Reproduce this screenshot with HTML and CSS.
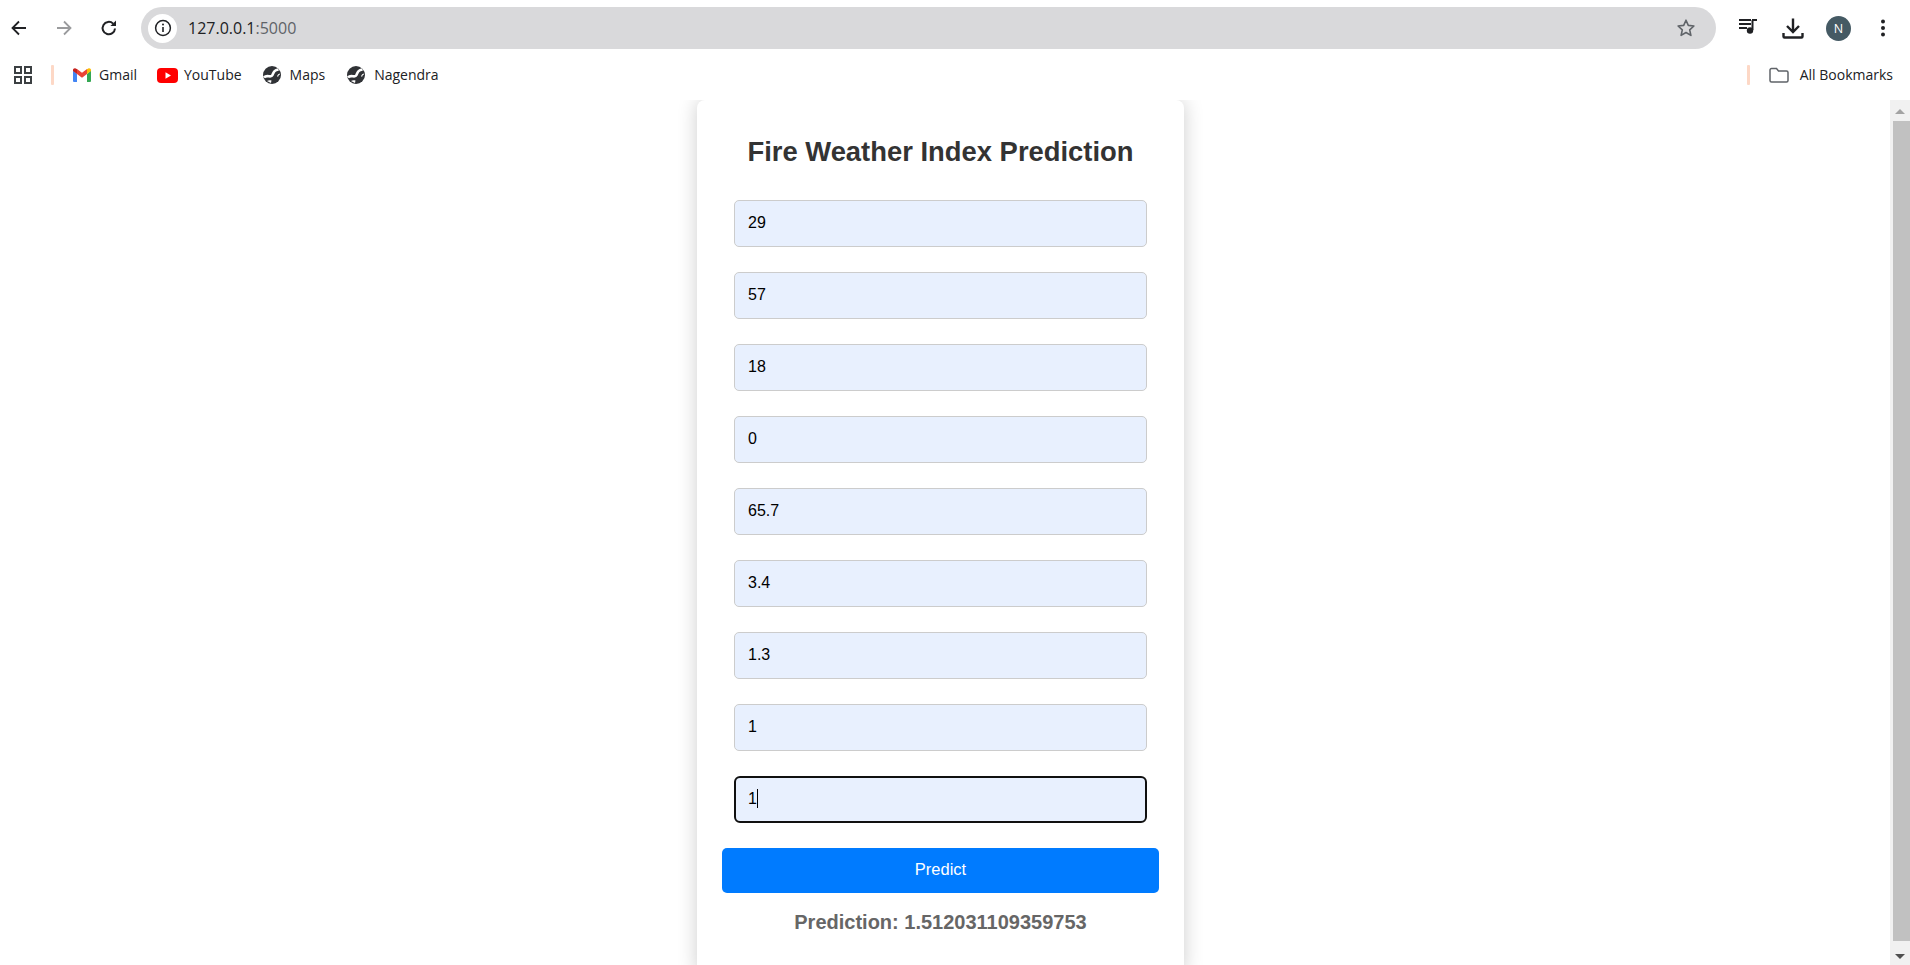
FILE: index.html
```html
<!DOCTYPE html>
<html lang="en">
<head>
    <meta charset="UTF-8">
    <meta name="viewport" content="width=device-width, initial-scale=1.0">
    <title>Fire Weather Index Prediction</title>
    <link rel="stylesheet" href="styles.css">
</head>
<body>
    <div class="toolbar">
        <svg class="nav-icon" viewBox="0 0 20 20" width="20" height="20"><path d="M17 10H4M10 3.500 3.500 10l6.500 6.500" fill="none" stroke="#202124" stroke-width="1.800"/></svg>
        <svg class="nav-icon" viewBox="0 0 20 20" width="20" height="20"><path d="M3 10h13M10 3.500l6.500 6.500-6.500 6.500" fill="none" stroke="#9a9b9d" stroke-width="1.800"/></svg>
        <svg class="nav-icon" viewBox="0 0 20 20" width="20" height="20"><path d="M16 10.500a6.200 6.200 0 1 1-1.900-4.900" fill="none" stroke="#202124" stroke-width="2"/><path d="M17 2.500v5.600h-5.600z" fill="#202124"/></svg>
        <div class="omnibox">
            <span class="site-info">
                <svg viewBox="0 0 18 18" width="18" height="18"><circle cx="9" cy="9" r="7.400" fill="none" stroke="#202124" stroke-width="1.500"/><path d="M9 8v5" stroke="#202124" stroke-width="1.600"/><circle cx="9" cy="5.600" r="1" fill="#202124"/></svg>
            </span>
            <span class="url">127.0.0.1<span class="url-port">:5000</span></span>
            <svg class="star" viewBox="0 0 20 20" width="20" height="20"><path d="M10 2.200l2.300 5.200 5.600.6-4.200 3.800 1.200 5.600L10 14.500l-4.900 2.900 1.200-5.600L2.100 8l5.600-.6z" fill="none" stroke="#5f6368" stroke-width="1.600" stroke-linejoin="round"/></svg>
        </div>
        <svg class="queue" viewBox="0 0 20 20" width="20" height="20"><path d="M1 4h12M1 8h12M1 12h8" stroke="#202124" stroke-width="1.800"/><path d="M14 4h5" stroke="#202124" stroke-width="2"/><path d="M14.500 4v10" stroke="#202124" stroke-width="2"/><circle cx="12" cy="14.500" r="3.200" fill="#202124"/></svg>
        <svg class="download" viewBox="0 0 22 22" width="22" height="22"><path d="M11 1.500v13M5 9l6 6 6-6" fill="none" stroke="#202124" stroke-width="2.400"/><path d="M1.500 16v3.500a1 1 0 0 0 1 1h17a1 1 0 0 0 1-1V16" fill="none" stroke="#202124" stroke-width="2.400"/></svg>
        <span class="avatar">N</span>
        <svg class="kebab" viewBox="0 0 6 20" width="6" height="20"><circle cx="3" cy="3.500" r="2" fill="#202124"/><circle cx="3" cy="10" r="2" fill="#202124"/><circle cx="3" cy="16.500" r="2" fill="#202124"/></svg>
    </div>

    <div class="bookmarks">
        <svg class="apps" viewBox="0 0 18 18" width="18" height="18"><path d="M1 1h6v6H1zM11 1h6v6h-6zM1 11h6v6H1zM11 11h6v6h-6z" fill="none" stroke="#3c4043" stroke-width="2"/></svg>
        <span class="sep"></span>
        <a class="mark mark-gmail">
            <svg class="mark-icon" viewBox="0 0 18 14" width="18" height="14"><path d="M0 2.500V13a1 1 0 0 0 1 1h3V6z" fill="#4285f4"/><path d="M18 2.500V13a1 1 0 0 1-1 1h-3V6z" fill="#34a853"/><path d="M14 1v5l4-3V2c0-1.500-1.700-2.300-3-1.300z" fill="#fbbc04"/><path d="M4 6V1l5 3.800L14 1v5l-5 3.800z" fill="#ea4335"/><path d="M0 3V2C0 .5 1.700-.3 3 .7L4 1v5z" fill="#c5221f"/></svg>
            <span class="mark-label">Gmail</span>
        </a>
        <a class="mark mark-yt">
            <svg class="mark-icon" viewBox="0 0 21 15" width="21" height="15"><rect width="21" height="15" rx="4" fill="#f00"/><path d="M8.500 4.300v6.400l5.500-3.200z" fill="#fff"/></svg>
            <span class="mark-label">YouTube</span>
        </a>
        <a class="mark mark-maps">
            <svg class="mark-icon" viewBox="0 0 18 18" width="18" height="18"><circle cx="9" cy="9" r="9" fill="#303236"/><path d="M1 11.500C4 8 8 12.500 9.500 9S11 4.500 15.500 3.500" fill="none" stroke="#fff" stroke-width="2.600"/><path d="M4 15c1.500-1 3-1 4.500-.5L8 17z" fill="#fff"/><path d="M17 8c-1 0-2 1-2.500 2.500" fill="none" stroke="#fff" stroke-width="1.200"/></svg>
            <span class="mark-label">Maps</span>
        </a>
        <a class="mark">
            <svg class="mark-icon" viewBox="0 0 18 18" width="18" height="18"><circle cx="9" cy="9" r="9" fill="#303236"/><path d="M1 11.500C4 8 8 12.500 9.500 9S11 4.500 15.500 3.500" fill="none" stroke="#fff" stroke-width="2.600"/><path d="M4 15c1.500-1 3-1 4.500-.5L8 17z" fill="#fff"/><path d="M17 8c-1 0-2 1-2.500 2.500" fill="none" stroke="#fff" stroke-width="1.200"/></svg>
            <span class="mark-label">Nagendra</span>
        </a>
        <span class="sep sep-right"></span>
        <a class="mark mark-all">
            <svg class="mark-icon" viewBox="0 0 20 16" width="20" height="16"><path d="M1 3a1.500 1.500 0 0 1 1.500-1.500h5L9.500 4h8A1.500 1.500 0 0 1 19 5.500v8a1.500 1.500 0 0 1-1.500 1.500h-15A1.500 1.500 0 0 1 1 13.500z" fill="none" stroke="#5f6368" stroke-width="1.500"/></svg>
            <span class="mark-label">All Bookmarks</span>
        </a>
    </div>

    <div class="viewport">
        <main class="page">
            <div class="card">
                <h1>Fire Weather Index Prediction</h1>
                <form class="predict-form">
                    <input type="text" value="29">
                    <input type="text" value="57">
                    <input type="text" value="18">
                    <input type="text" value="0">
                    <input type="text" value="65.7">
                    <input type="text" value="3.4">
                    <input type="text" value="1.3">
                    <input type="text" value="1">
                    <div class="focus-wrap">
                        <input class="focused" type="text" value="1">
                        <span class="caret"></span>
                    </div>
                    <button type="button">Predict</button>
                </form>
                <h2>Prediction: 1.512031109359753</h2>
            </div>
        </main>
        <div class="scrollbar">
            <span class="arrow-up"></span>
            <span class="thumb"></span>
            <span class="arrow-down"></span>
        </div>
    </div>
</body>
</html>
```

FILE: styles.css
```css
* {
    box-sizing: border-box;
}

html, body {
    height: 100%;
}

body {
    margin: 0;
    display: flex;
    flex-direction: column;
    overflow: hidden;
    background-color: #fff;
    font-family: "Liberation Sans", Arial, sans-serif;
}

.toolbar {
    height: 56px;
    flex: none;
    display: flex;
    align-items: center;
}

.nav-icon {
    flex: none;
    margin-left: 9px;
}

.nav-icon + .nav-icon {
    margin-left: 25px;
}

.omnibox {
    flex: 1;
    height: 42px;
    margin-left: 22px;
    padding-left: 7px;
    padding-right: 20px;
    display: flex;
    align-items: center;
    background-color: #d9d9db;
    border-radius: 21px;
}

.site-info {
    width: 29px;
    height: 29px;
    display: flex;
    align-items: center;
    justify-content: center;
    background-color: #fff;
    border-radius: 50%;
}

.url {
    flex: 1;
    margin-left: 11px;
    font-family: "Open Sans", sans-serif;
    font-size: 16px;
    color: #202124;
}

.url-port {
    color: #5f6368;
}

.queue {
    flex: none;
    margin-left: 22px;
    margin-top: -4px;
}

.download {
    flex: none;
    margin-left: 24px;
}

.avatar {
    width: 25px;
    height: 25px;
    flex: none;
    margin-left: 22px;
    display: flex;
    align-items: center;
    justify-content: center;
    background-color: #455a64;
    border-radius: 50%;
    color: #fff;
    font-family: "Open Sans", sans-serif;
    font-size: 12.5px;
}

.kebab {
    flex: none;
    margin-left: 29px;
    margin-right: 24px;
}

.bookmarks {
    height: 44px;
    flex: none;
    padding-bottom: 6px;
    display: flex;
    align-items: center;
    font-family: "Open Sans", sans-serif;
    font-size: 14px;
    color: #202124;
}

.apps {
    flex: none;
    margin-left: 14px;
}

.sep {
    width: 3px;
    height: 20px;
    flex: none;
    margin-left: 19px;
    margin-right: 19px;
    background-color: #fdd8c6;
    border-radius: 1px;
}

.mark {
    display: flex;
    align-items: center;
    margin-right: 20px;
    white-space: nowrap;
}

.mark-icon {
    flex: none;
    margin-right: 9px;
}

.mark-label {
    padding-bottom: 2px;
}

.mark-gmail .mark-icon {
    margin-right: 8px;
}

.mark-yt {
    margin-right: 21px;
}

.mark-yt .mark-icon {
    margin-right: 6px;
}

.mark-maps {
    margin-right: 22px;
}

.sep-right {
    margin-left: auto;
    margin-right: 19px;
}

.mark-all {
    margin-right: 17px;
}

.mark-all .mark-icon {
    margin-right: 11px;
}

.viewport {
    flex: 1;
    min-height: 0;
    display: flex;
    overflow: hidden;
}

.page {
    flex: 1;
    padding-right: 9px;
    display: flex;
    justify-content: center;
    align-items: flex-start;
}

.card {
    width: 487px;
    padding: 36px 25px 40px;
    background-color: #fff;
    border-radius: 8px;
    box-shadow: 0 0 20px rgba(0, 0, 0, 0.2);
    text-align: center;
}

h1 {
    margin: 0 0 32px;
    font-size: 27.4px;
    line-height: 32px;
    color: #333;
}

.predict-form {
    display: flex;
    flex-direction: column;
    gap: 25px;
}

input {
    width: 413px;
    height: 47px;
    margin: 0 auto;
    display: block;
    padding: 0 13px 2px;
    background-color: #e8f0fe;
    border: 1px solid #ccc;
    border-radius: 5px;
    outline: none;
    font-family: "Liberation Sans", Arial, sans-serif;
    font-size: 16px;
    color: #000;
}

.focus-wrap {
    position: relative;
}

.focused {
    border: 2px solid #101010;
    padding: 0 12px 2px;
    border-radius: 6px;
}

.caret {
    position: absolute;
    left: 35px;
    top: 13px;
    width: 1px;
    height: 19px;
    background-color: #000;
}

button {
    height: 45px;
    padding-bottom: 4px;
    background-color: #007bff;
    border: none;
    border-radius: 5px;
    color: #fff;
    font-family: "Liberation Sans", Arial, sans-serif;
    font-size: 16.5px;
}

h2 {
    margin: 17px 0 0;
    font-size: 20px;
    line-height: 25px;
    color: #666;
}

.scrollbar {
    width: 20px;
    flex: none;
    display: flex;
    flex-direction: column;
    align-items: center;
    background-color: #f1f1f1;
}

.arrow-up {
    margin-top: 9px;
    border-left: 5px solid transparent;
    border-right: 5px solid transparent;
    border-bottom: 5px solid #a3a3a3;
}

.thumb {
    width: 17px;
    height: 820px;
    margin: 7px 0 0 2px;
    background-color: #c1c1c1;
}

.arrow-down {
    margin-top: 13px;
    border-left: 5px solid transparent;
    border-right: 5px solid transparent;
    border-top: 5px solid #505050;
}
```
